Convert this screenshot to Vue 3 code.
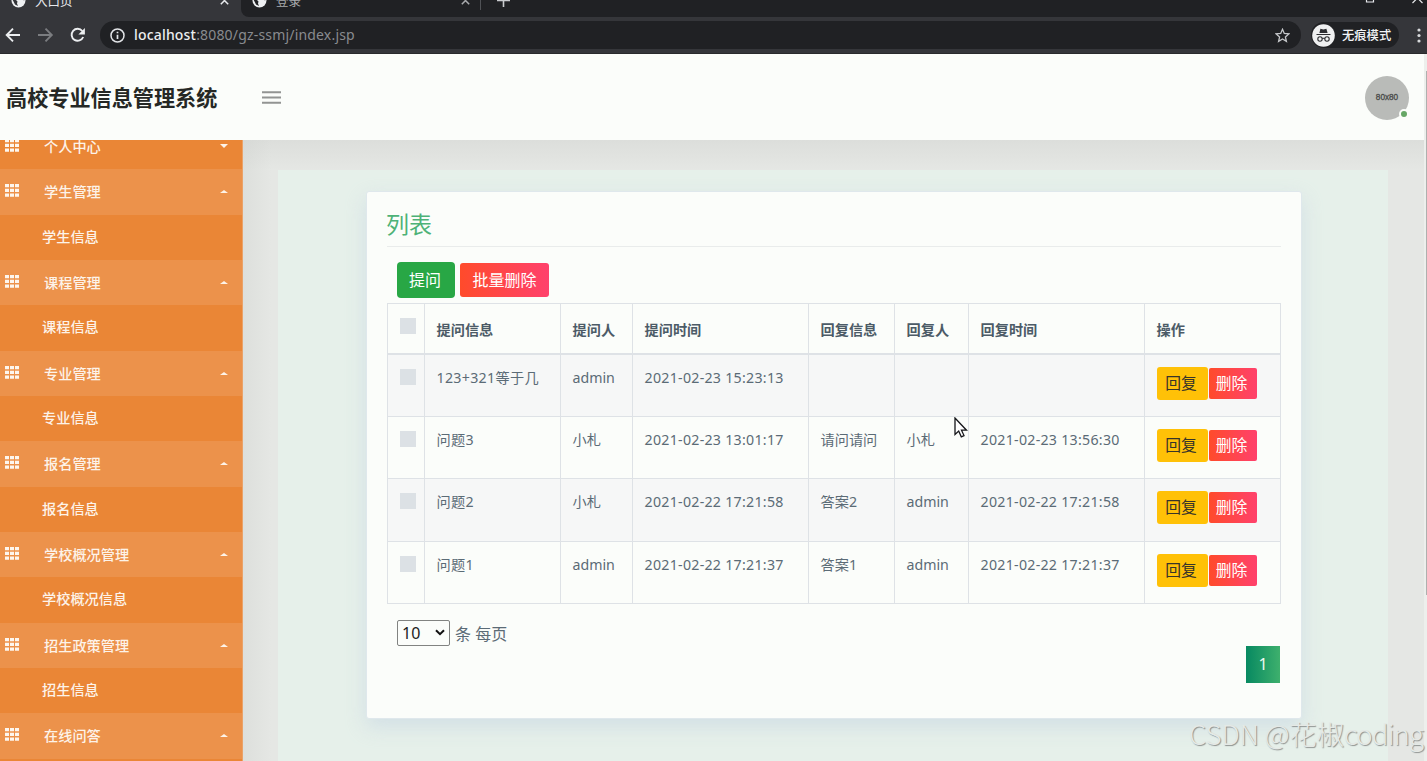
<script setup>
const menu = [
  { name: '学生管理', child: '学生信息' },
  { name: '课程管理', child: '课程信息' },
  { name: '专业管理', child: '专业信息' },
  { name: '报名管理', child: '报名信息' },
  { name: '学校概况管理', child: '学校概况信息' },
  { name: '招生政策管理', child: '招生信息' },
  { name: '在线问答', child: '' },
]
const heads = ['提问信息', '提问人', '提问时间', '回复信息', '回复人', '回复时间', '操作']
const rows = [
  ['123+321等于几', 'admin', '2021-02-23 15:23:13', '', '', ''],
  ['问题3', '小札', '2021-02-23 13:01:17', '请问请问', '小札', '2021-02-23 13:56:30'],
  ['问题2', '小札', '2021-02-22 17:21:58', '答案2', 'admin', '2021-02-22 17:21:58'],
  ['问题1', 'admin', '2021-02-22 17:21:37', '答案1', 'admin', '2021-02-22 17:21:37'],
]
const isTime = (i) => i === 2 || i === 5
</script>

<template>
  <div class="window">
    <div class="chrome">
      <div class="tabs">
        <div class="tab active">
          <svg class="globe" width="15" height="15" viewBox="0 0 15 15"><circle cx="7.5" cy="7.5" r="7" fill="#eef0f2" /><path d="M1.500 6.500h3l2 2-.5 2 1 2.500-3-1.500zM8 1l1 2-2 2 2.500 2 1.500-1 2 1.500 1-1-1-3.500z" fill="#333438" /></svg>
          <span class="tab-name">入口页</span>
          <svg class="close" width="9" height="9" viewBox="0 0 9 9"><path d="M.8.8l7.400 7.400M8.200.8L.8 8.200" stroke="#e8eaed" stroke-width="1.500" /></svg>
        </div>
        <div class="tab-rest">
          <div class="tab second">
            <svg class="globe" width="15" height="15" viewBox="0 0 15 15"><circle cx="7.500" cy="7.500" r="7" fill="#eef0f2" /><path d="M1.500 6.500h3l2 2-.5 2 1 2.500-3-1.500zM8 1l1 2-2 2 2.500 2 1.500-1 2 1.500 1-1-1-3.500z" fill="#202124" /></svg>
            <span class="tab-name">登录</span>
            <svg class="close" width="9" height="9" viewBox="0 0 9 9"><path d="M.8.8l7.400 7.400M8.200.8L.8 8.200" stroke="#a9abae" stroke-width="1.500" /></svg>
          </div>
          <i class="divider"></i>
          <svg class="plus" width="13" height="13" viewBox="0 0 13 13"><path d="M6.500 0v13M0 6.500h13" stroke="#c9cbce" stroke-width="1.600" /></svg>
          <svg class="winbtns" width="58" height="12" viewBox="0 0 58 12"><path d="M1.500 2h7v8h-7zM47.500 11l10-10M47.500 1l10 10" fill="none" stroke="#e8eaed" stroke-width="1.200" /></svg>
        </div>
      </div>
      <div class="toolbar">
        <svg class="nav" width="90" height="20" viewBox="0 0 90 20" fill="none" stroke-width="1.900">
          <path d="M20 10H7M13 3.700L6.700 10l6.300 6.300" stroke="#eceef0" />
          <path d="M38 10h13M45.500 3.700l6.300 6.300-6.300 6.300" stroke="#7b7d80" />
          <path d="M82.300 6A6 6 0 1 0 83.200 12" stroke="#eceef0" />
          <path d="M84.900 3v6.500h-6.500z" fill="#eceef0" />
        </svg>
        <div class="address">
          <svg width="15" height="15" viewBox="0 0 15 15"><circle cx="7.500" cy="7.500" r="6.500" fill="none" stroke="#e2e4e7" stroke-width="1.500" /><path d="M7.500 6.700v4.300M7.500 3.700v1.600" stroke="#e2e4e7" stroke-width="1.700" /></svg>
          <span class="url"><b>localhost</b>:8080/gz-ssmj/index.jsp</span>
          <svg class="star" width="15" height="15" viewBox="0 0 15 15"><path d="M7.500 1.300l1.800 4.200 4.500.4-3.400 3 1 4.400-3.900-2.400-3.900 2.400 1-4.400-3.400-3 4.500-.4z" fill="none" stroke="#c5c7ca" stroke-width="1.300" /></svg>
        </div>
        <div class="incognito">
          <svg width="23" height="23" viewBox="0 0 23 23"><circle cx="11.500" cy="11.500" r="11.300" fill="#eff0f1" /><path d="M8.400 4.800l3 .6 3-.6 1.200 4.200H7.400zM4.500 10h14v1h-14z" fill="#2c2d31" /><g fill="none" stroke="#2c2d31" stroke-width="1.100"><circle cx="8" cy="15" r="2.200" /><circle cx="15" cy="15" r="2.200" /><path d="M10.200 14.500q1.300-.6 2.600 0" /></g></svg>
          <span>无痕模式</span>
        </div>
        <svg class="dots" width="4" height="15" viewBox="0 0 4 15" fill="#d8dadc"><circle cx="2" cy="2" r="1.600" /><circle cx="2" cy="7.500" r="1.600" /><circle cx="2" cy="13" r="1.600" /></svg>
      </div>
    </div>

    <div class="page">
      <div class="app">
        <header class="topbar">
          <h1>高校专业信息管理系统</h1>
          <svg class="burger" width="19" height="13" viewBox="0 0 19 13"><path d="M0 1.200h19M0 6.500h19M0 11.800h19" stroke="#929492" stroke-width="1.900" /></svg>
          <div class="avatar">80x80<i></i></div>
        </header>
        <div class="body">
          <aside class="sidebar">
            <div class="item partial">
              <svg class="grid" width="14" height="13" viewBox="0 0 14 13"><path d="M0 0h4v3.300H0zM5 0h4v3.300H5zM10 0h4v3.300h-4zM0 4.700h4V8H0zM5 4.700h4V8H5zM10 4.700h4V8h-4zM0 9.400h4v3.300H0zM5 9.400h4v3.300H5zM10 9.400h4v3.300h-4z" fill="#fdf6ee" /></svg>
              <span>个人中心</span><i class="caret down"></i>
            </div>
            <template v-for="m in menu" :key="m.name">
              <div class="item open">
                <svg class="grid" width="14" height="13" viewBox="0 0 14 13"><path d="M0 0h4v3.300H0zM5 0h4v3.300H5zM10 0h4v3.300h-4zM0 4.700h4V8H0zM5 4.700h4V8H5zM10 4.700h4V8h-4zM0 9.400h4v3.300H0zM5 9.400h4v3.300H5zM10 9.400h4v3.300h-4z" fill="#fdf6ee" /></svg>
                <span>{{ m.name }}</span><i class="caret"></i>
              </div>
              <div class="sub">{{ m.child }}</div>
            </template>
          </aside>
          <main class="content">
            <div class="panel">
              <section class="card">
                <h2>列表</h2>
                <div class="actions">
                  <button class="btn ask">提问</button>
                  <button class="btn danger">批量删除</button>
                </div>
                <table>
                  <colgroup><col class="c0" /><col class="c1" /><col class="c2" /><col class="c3" /><col class="c4" /><col class="c5" /><col class="c6" /><col class="c7" /></colgroup>
                  <thead>
                    <tr><th><i class="check"></i></th><th v-for="h in heads" :key="h">{{ h }}</th></tr>
                  </thead>
                  <tbody>
                    <tr v-for="(r, n) in rows" :key="n">
                      <td><i class="check"></i></td>
                      <td v-for="(c, i) in r" :key="i" :class="{ time: isTime(i), question: i === 0 }">{{ c }}</td>
                      <td><div class="ops"><button class="reply">回复</button><button class="del">删除</button></div></td>
                    </tr>
                  </tbody>
                </table>
                <div class="per-page">
                  <span class="select">10<svg width="10" height="7" viewBox="0 0 10 7"><path d="M1 1.200l4 4 4-4" fill="none" stroke="#111" stroke-width="2" /></svg></span>
                  <span>条 每页</span>
                </div>
                <div class="pager"><span>1</span></div>
              </section>
            </div>
          </main>
        </div>
      </div>
      <div class="scroll"><i></i></div>
    </div>

    <svg class="cursor" width="14" height="21" viewBox="0 0 14 21"><path d="M1 1v16.500l3.700-3.400 2.600 5.700 2.700-1.200-2.500-5.400h5z" fill="#fff" stroke="#15161a" stroke-width="1.300" /></svg>
    <div class="watermark">CSDN @花椒<span>coding</span></div>
  </div>
</template>

<style>
html, body { margin: 0; overflow: hidden; }
</style>
<style scoped>
* { box-sizing: border-box; }
.window { position: relative; width: 1427px; height: 761px; overflow: hidden; display: flex; flex-direction: column; font-family: "Noto Sans", "Noto Sans CJK SC", sans-serif; background: #e5e7e4; }
svg { display: block; flex: none; }
button { font-family: inherit; border: 0; padding: 0; margin: 0; white-space: nowrap; }
.chrome { height: 54px; flex: none; background: #35363a; border-bottom: 1px solid #292a2c; }
.tabs { display: flex; height: 17px; overflow: hidden; }
.tab { display: flex; align-items: center; height: 28px; margin-top: -14px; font-size: 12.500px; color: #e8eaed; }
.tab.active { width: 241px; padding: 0 12px 0 11px; }
.tab-name { margin-left: 9px; }
.close { margin-left: auto; }
.tab-rest { flex: 1; display: flex; background: #202124; border-bottom-left-radius: 8px; overflow: hidden; }
.tab.second { width: 239px; padding: 0 10px 0 11px; color: #a9abae; }
.divider { width: 1px; height: 10px; background: #505256; }
.plus { margin: -6px 0 0 16px; }
.winbtns { margin: -8px 4px 0 auto; }
.toolbar { height: 36px; display: flex; align-items: center; }
.nav { width: 90px; }
.address { width: 1201px; height: 28px; margin-left: 10px; border-radius: 14px; background: #202124; display: flex; align-items: center; padding: 0 11px 0 10px; }
.url { margin-left: 9px; margin-top: -1px; font-size: 14px; color: #898b8f; letter-spacing: .18px; }
.url b { color: #eceef0; font-weight: 500; }
.star { margin-left: auto; }
.incognito { margin-left: 10px; width: 88px; height: 26px; border-radius: 13px; background: #202124; display: flex; align-items: center; padding-left: 1px; gap: 7px; font-size: 12.300px; color: #f2f4f7; font-weight: 500; white-space: nowrap; }
.dots { margin-left: 18px; }
.page { flex: 1; display: flex; min-height: 0; }
.app { width: 1424px; display: flex; flex-direction: column; min-height: 0; }
.scroll { width: 3px; background: #edefec; padding: 17px 0 0 2px; }
.scroll i { display: block; width: 1px; height: 524px; background: #aeb0ae; }
.topbar { position: relative; height: 86px; flex: none; background: #fbfdfa; display: flex; align-items: center; padding: 1px 15px 0 6px; }
h1 { margin: 0; width: 256px; font-size: 21.150px; line-height: 30px; color: #252825; font-weight: 700; white-space: nowrap; }
.avatar { position: relative; margin-left: auto; width: 44px; height: 44px; border-radius: 50%; background: #b9bbb8; font-family: "Liberation Sans", sans-serif; font-size: 8.200px; font-weight: 400; -webkit-text-stroke: .3px #484a48; color: #484a48; line-height: 44px; text-align: center; }
.avatar i { position: absolute; right: 0; bottom: 1px; width: 10px; height: 10px; border: 2px solid #fbfdfa; border-radius: 50%; background: #66a765; }
.body { flex: 1; display: flex; min-height: 0; overflow: hidden; }
.sidebar { width: 243px; flex: none; background: #ea8636; border-right: 1px solid #eba267; color: #fdf3e9; font-size: 14.200px; font-weight: 500; }
.item { height: 45.330px; display: flex; align-items: center; padding: 0 14px 0 5px; }
.item span { margin-left: 25px; }
.partial { height: 29.300px; overflow: hidden; align-items: flex-start; }
.partial .grid { margin-top: -1px; }
.partial span { line-height: 20px; margin-top: -3px; }
.partial .caret { margin-top: 4px; }
.open { background: #ec924b; }
.open .grid { margin-top: -2px; }
.open span { margin-top: -1px; }
.sub { height: 45.330px; line-height: 44.200px; padding-left: 42px; }
.caret { margin-left: auto; border-left: 4px solid transparent; border-right: 4px solid transparent; border-bottom: 3px solid #fdf3e9; }
.caret.down { border-bottom: 0; border-top: 4px solid #fdf3e9; }
.content { flex: 1; padding: 30px 36px 0 35px; background: linear-gradient(90deg, rgba(205, 208, 204, .35), rgba(229, 231, 228, 0) 28px), linear-gradient(#dcdedb, #e5e7e4 30px); }
.panel { height: 620px; background: #e6f0ea; padding: 21px 86px 0 88px; }
.card { height: 528px; border: 1px solid #dfe8ec; border-radius: 3px; background: #fbfdfa; box-shadow: 0 8px 20px rgba(187, 204, 224, .45); padding: 17px 20px 0; color: #5b6b76; }
h2 { margin: 0; height: 38px; line-height: 31px; font-size: 23px; font-weight: 400; color: #4db277; border-bottom: 1px solid #e9eceb; text-indent: -1px; }
.actions { display: flex; align-items: center; gap: 5px; height: 36px; margin: 15px 0 5px 10px; }
.btn { font-size: 16px; color: #fff; line-height: 22px; padding-bottom: 1px; }
.ask { width: 58px; height: 36px; border-radius: 4px; background: #28a745; padding-right: 2px; }
.danger { width: 89px; height: 34px; border-radius: 3px; background: linear-gradient(90deg, #ff4b2b, #ff416c); }
table { width: 894px; table-layout: fixed; border-collapse: collapse; font-size: 14.200px; line-height: 22px; }
.c0 { width: 37px; } .c1 { width: 136px; } .c2 { width: 72px; } .c3 { width: 176px; } .c4 { width: 86px; } .c5 { width: 74px; } .c6 { width: 176px; } .c7 { width: 136px; }
th, td { border: 1px solid #dee2e6; padding: 12px 0 0 11.500px; text-align: left; vertical-align: top; white-space: nowrap; }
th { height: 50px; padding-top: 15px; border-bottom-width: 2px; font-weight: 600; color: #4c5b67; }
td { height: 62.500px; }
tbody tr:nth-child(odd) { background: #f6f7f7; }
.time { letter-spacing: .27px; }
.question { letter-spacing: .3px; }
.check { display: block; width: 16px; height: 16px; background: #dce1e5; margin-top: 2px; }
th .check { margin-top: -1px; }
.ops { display: flex; align-items: center; gap: 1px; height: 33px; }
.ops button { font-size: 15.800px; line-height: 24px; padding-bottom: 1px; padding-right: 2px; }
.reply { width: 51px; height: 33px; border-radius: 3px; background: #ffc107; color: #37342a; }
.del { width: 48px; height: 31px; border-radius: 2px; background: linear-gradient(90deg, #ff4b2b, #ff416c); color: #fff; }
.per-page { display: flex; align-items: center; height: 27px; margin: 15px 0 0 10px; gap: 5px; font-size: 16px; }
.select { width: 53px; height: 26px; border: 1px solid #818381; border-radius: 2px; color: #222; display: flex; align-items: center; justify-content: space-between; padding: 0 4px; }
.pager { display: flex; justify-content: flex-end; padding-right: 1px; }
.pager span { width: 34px; height: 37px; line-height: 37px; text-align: center; color: #eef8f2; font-size: 16px; background: linear-gradient(90deg, #078961, #3eb06d); }
.cursor { position: absolute; left: 954px; top: 417px; }
.watermark { position: absolute; left: 1189px; top: 713px; line-height: 40px; font-family: "Noto Sans CJK SC", sans-serif; font-size: 27.500px; letter-spacing: -.2px; font-weight: 300; white-space: nowrap; color: #e5e9e6; text-shadow: 1px 1px 1px #8d918f; }
.watermark span { letter-spacing: -.9px; }
</style>
